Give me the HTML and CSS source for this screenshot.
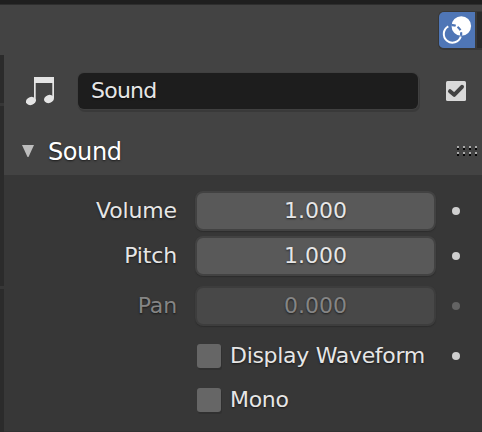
FILE: index.html
```html
<!DOCTYPE html>
<html lang="en">
<head>
<meta charset="utf-8">
<title>Sound properties</title>
<link rel="stylesheet" href="styles.css">
</head>
<body>
<header class="topbar">
  <div class="overlay-group">
    <button class="overlay" aria-label="Overlays">
      <svg width="36" height="36" viewBox="0 0 36 36"><circle cx="22.300" cy="14" r="9.800" fill="#fff"/><path d="M9.300 14.300A8.700 8.700 0 1 0 21.800 24.500" fill="none" stroke="#fff" stroke-width="2"/><path d="M12.300 13.300a8.700 8.700 0 0 1 9.700 10.500" fill="none" stroke="#4f76b6" stroke-width="2.200" stroke-dasharray="4.500 2"/></svg>
    </button>
    <div class="next"></div>
  </div>
</header>
<div class="main">
  <div class="edge"><i class="e1"></i><i class="e2"></i><i class="e3"></i></div>
  <main class="props">
    <section class="head">
      <div class="name-row">
        <svg class="note" width="30" height="30" viewBox="0 0 30 30"><path d="M8 1H28V22H26.300V7H9.700V25H8Z" fill="#e4e4e4"/><ellipse cx="4.900" cy="25" rx="5.100" ry="4" transform="rotate(-18 4.900 25)" fill="#e4e4e4"/><ellipse cx="23" cy="23" rx="5.100" ry="4" transform="rotate(-18 23 23)" fill="#e4e4e4"/></svg>
        <div class="name">Sound</div>
        <svg class="check" width="20" height="20" viewBox="0 0 20 20"><rect width="20" height="20" rx="1.500" fill="#d9d9d9"/><path d="M4 10.200L8.200 13.800L16 5.800" fill="none" stroke="#434343" stroke-width="4" stroke-linecap="round" stroke-linejoin="round"/></svg>
      </div>
      <div class="title-row">
        <svg width="12" height="12" viewBox="0 0 12 12"><path d="M0 0H12L6.500 12H5.500Z" fill="#bdbdbd"/></svg>
        <h2>Sound</h2>
        <svg class="grip" width="20" height="10" viewBox="0 0 20 10"><path d="M0 1H20M0 7H20" stroke="#aaa" stroke-width="2" stroke-dasharray="2 4"/><path d="M0 3H20M0 9H20" stroke="#050505" stroke-width="2" stroke-dasharray="2 4"/></svg>
      </div>
    </section>
    <section class="body">
      <div class="row"><label>Volume</label><div class="field">1.000</div><span class="dot"></span></div>
      <div class="row"><label>Pitch</label><div class="field">1.000</div><span class="dot"></span></div>
      <div class="row off"><label>Pan</label><div class="field">0.000</div><span class="dot"></span></div>
      <div class="toggle"><span class="box"></span><span>Display Waveform</span><span class="dot"></span></div>
      <div class="toggle"><span class="box"></span><span>Mono</span></div>
    </section>
  </main>
</div>
</body>
</html>
```
FILE: styles.css
```css
* { box-sizing: border-box; }
body {
  margin: 0;
  width: 482px;
  height: 432px;
  overflow: hidden;
  background: #434343;
  color: #e6e6e6;
  font: 22px/30px "DejaVu Sans", sans-serif;
  text-shadow: 0 1px 2px rgba(0, 0, 0, .6);
}
svg { display: block; flex: none; }
.topbar {
  height: 55px;
  border-top: 4px solid #1f1f1f;
  box-shadow: inset 0 1px #2e2e2e;
  display: flex;
  justify-content: flex-end;
  padding-top: 7px;
}
.overlay-group {
  display: flex;
  width: 44px;
  height: 39px;
  border: 1px solid #373737;
  border-right: 0;
  border-bottom-width: 2px;
  border-radius: 6px 0 0 6px;
  overflow: hidden;
}
.overlay {
  width: 36px;
  padding: 0;
  border: 0;
  background: #4f76b6;
}
.next { flex: 1; border-left: 2px solid #3a3a3a; background: #2b2b2b; }
.main { display: flex; height: 377px; }
.edge { width: 4px; display: flex; flex-direction: column; gap: 3px; background: #373737; }
.edge i { background: #2b2b2b; }
.e1 { height: 48px; }
.e2 { height: 180px; }
.e3 { flex: 1; }
.props { flex: 1; display: flex; flex-direction: column; }
.head { height: 120px; }
.name-row { display: flex; align-items: center; height: 72px; padding: 0 16px 0 22px; }
.name {
  width: 340px;
  height: 36px;
  margin: 0 28px 0 22px;
  padding-left: 13px;
  line-height: 35px;
  letter-spacing: -.75px;
  border-radius: 6px;
  background: #1d1d1d;
  box-shadow: 0 0 0 1px #404040, 1px 2px 0 1px #393939;
}
.title-row { display: flex; align-items: center; height: 48px; padding: 0 5px 0 18px; }
h2 {
  margin: 2px auto 0 14px;
  font-size: 24px;
  font-weight: 400;
  letter-spacing: -.4px;
  color: #fff;
}
.body {
  flex: 1;
  padding-top: 16px;
  background: #373737;
  border-bottom: 1px solid #323232;
}
.row { display: flex; align-items: center; height: 40px; margin-bottom: 5px; }
.row label { width: 173px; letter-spacing: -.15px; text-align: right; }
.field {
  width: 241px;
  height: 40px;
  margin: 0 16px 0 18px;
  line-height: 36px;
  text-align: center;
  border: 2px solid #424242;
  border-radius: 8px;
  background: #595959;
  box-shadow: 0 1px 1px #2d2d2d;
}
.dot { width: 8px; height: 8px; border-radius: 50%; background: #cfcfcf; }
.off { margin-top: 10px; margin-bottom: 10px; color: #858585; }
.off .field { background: #484848; border-color: #3d3d3d; }
.off .dot { background: #636363; }
.toggle {
  display: flex;
  align-items: center;
  height: 40px;
  margin: 0 22px 4px 193px;
  letter-spacing: -.3px;
}
.box {
  width: 24px;
  height: 24px;
  margin-right: 9px;
  border-radius: 3px;
  background: #666;
  box-shadow: 1px 2px #303030;
}
.toggle .dot { margin-left: auto; }
```
